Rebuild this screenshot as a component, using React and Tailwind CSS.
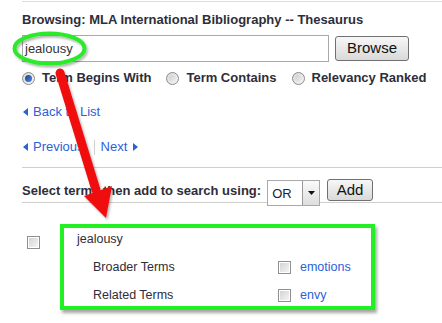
import React from "react";

function Radio({ on }) {
  return (
    <span className="relative inline-flex w-[13px] h-[13px] shrink-0 rounded-full border border-[#8a8a8a] bg-gradient-to-br from-[#d8d8d8] to-[#f6f6f6] items-center justify-center">
      {on ? (
        <span className="w-[7px] h-[7px] rounded-full bg-gradient-to-br from-[#1d3f86] to-[#4f8be0]" />
      ) : (
        <span className="w-[7px] h-[7px] rounded-full bg-gradient-to-br from-[#cfcfcf] to-[#efefef]" />
      )}
    </span>
  );
}

function Check() {
  return (
    <span className="inline-flex w-[13px] h-[13px] shrink-0 border border-[#8f8f8f] bg-white p-px">
      <span className="w-full h-full bg-gradient-to-br from-[#d4d4d4] to-[#f4f4f4]" />
    </span>
  );
}

function TriLeft() {
  return (
    <svg width="5" height="8" viewBox="0 0 5 8" className="shrink-0">
      <path d="M5 0 L0 4 L5 8 Z" fill="#2a62d8" />
    </svg>
  );
}
function TriRight() {
  return (
    <svg width="5" height="8" viewBox="0 0 5 8" className="shrink-0">
      <path d="M0 0 L5 4 L0 8 Z" fill="#2a62d8" />
    </svg>
  );
}

export default function App() {
  return (
    <div
      className="relative w-[442px] h-[323px] bg-white overflow-hidden text-[#2e2e3a]"
      style={{ fontFamily: '"Liberation Sans", Arial, sans-serif' }}
    >
      <div className="mt-px ml-[22px] h-px bg-[#dcdcdc]" />
      <div className="pl-[22px] flex flex-col">
        <div className="mt-[10px] h-[16px] leading-[16px] text-[13px] font-bold whitespace-nowrap">
          Browsing: MLA International Bibliography -- Thesaurus
        </div>
        <div className="mt-[7px] flex items-start">
          <div className="w-[307px] h-[27px] border border-[#a9a9a9] flex items-center pl-[2px] text-[13px] text-[#333]">
            jealousy
          </div>
          <div className="ml-[6px] mt-px w-[74px] h-[25px] rounded-[3px] border border-[#707070] bg-gradient-to-b from-[#f7f7f7] to-[#d9d9d9] flex items-center justify-center text-[15px] text-[#111]">
            Browse
          </div>
        </div>
        <div className="mt-[8px] h-[16px] flex items-center text-[13px] font-bold whitespace-nowrap">
          <Radio on />
          <span className="ml-[7px]">Term Begins With</span>
          <span className="ml-[15px]"><Radio /></span>
          <span className="ml-[7px]">Term Contains</span>
          <span className="ml-[15px]"><Radio /></span>
          <span className="ml-[7px]">Relevancy Ranked</span>
        </div>
        <div className="mt-[18px] h-[16px] flex items-center text-[13px] text-[#2a62d8]">
          <span className="ml-px"><TriLeft /></span>
          <span className="ml-[5px]">Back to List</span>
        </div>
        <div className="mt-[19px] h-[16px] flex items-center text-[13px] text-[#2a62d8]">
          <span className="ml-px"><TriLeft /></span>
          <span className="ml-[5px]">Previous</span>
          <span className="ml-[10px] w-px h-[15px] bg-[#cfcfcf]" />
          <span className="ml-[6px]">Next</span>
          <span className="ml-[6px]"><TriRight /></span>
        </div>
        <div className="mt-[12px] h-px bg-[#cfcfcf]" />
        <div className="mt-[11px] h-[24px] border-b border-[#cfcfcf] flex items-start">
          <span className="mt-[4px] h-[16px] leading-[16px] text-[13px] font-bold whitespace-nowrap">
            Select terms then add to search using:
          </span>
          <div className="relative ml-[6px] mt-px w-[53px] h-[26px] border border-[#a9a9a9] bg-white flex items-stretch">
            <span className="flex-1 flex items-center pl-[4px] pt-[2px] text-[13px] text-[#223]">OR</span>
            <span className="w-[17px] border-l border-[#9a9a9a] bg-gradient-to-b from-[#fafafa] to-[#dedede] flex items-center justify-center">
              <svg width="7" height="4" viewBox="0 0 7 4">
                <path d="M0 0 L7 0 L3.5 4 Z" fill="#111" />
              </svg>
            </span>
          </div>
          <div className="ml-[7px] w-[46px] h-[22px] rounded-[3px] border border-[#707070] bg-gradient-to-b from-[#f7f7f7] to-[#d9d9d9] flex items-center justify-center text-[15px] text-[#111]">
            Add
          </div>
        </div>
        <div className="flex">
          <div className="ml-[5px] mt-[27px]">
            <Check />
          </div>
          <div className="ml-[37px] flex flex-col text-[12.5px]">
            <div className="mt-[28px] h-[16px] leading-[16px]">jealousy</div>
            <div className="mt-[10px] h-[20px] flex items-center">
              <span className="ml-[16px] w-[185px]">Broader Terms</span>
              <Check />
              <span className="ml-[9px] text-[#2a62d8]">emotions</span>
            </div>
            <div className="mt-[8px] h-[20px] flex items-center">
              <span className="ml-[16px] w-[185px]">Related Terms</span>
              <Check />
              <span className="ml-[9px] text-[#2a62d8]">envy</span>
            </div>
          </div>
        </div>
      </div>

      {/* annotation: green box */}
      <div className="absolute left-[60px] top-[224px] w-[315px] h-[86px] border-4 border-[#22f022] shadow-[2px_3px_3px_rgba(0,0,0,0.35)]" />

      {/* annotation: ellipse + arrow */}
      <svg className="absolute left-0 top-0 pointer-events-none" width="442" height="323" viewBox="0 0 442 323">
        <defs>
          <filter id="sh" x="-20%" y="-20%" width="140%" height="140%">
            <feDropShadow dx="1.5" dy="2" stdDeviation="1.2" floodColor="#000" floodOpacity="0.3" />
          </filter>
        </defs>
        <ellipse cx="49.5" cy="48.5" rx="35" ry="15" fill="none" stroke="#2aea2a" strokeWidth="4" filter="url(#sh)" />
        <g filter="url(#sh)">
          <line x1="60" y1="73" x2="96" y2="190" stroke="#f00d0d" strokeWidth="9" strokeLinecap="round" />
          <polygon points="84,196 112,186 106,218" fill="#f00d0d" />
        </g>
      </svg>
    </div>
  );
}
